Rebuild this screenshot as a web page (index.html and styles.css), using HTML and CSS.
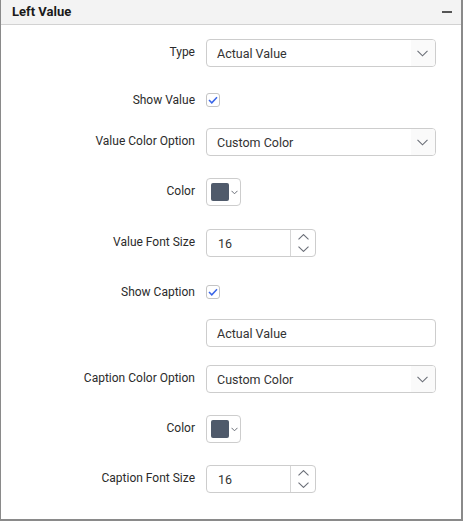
FILE: index.html
```html
<!DOCTYPE html>
<html>
<head>
<meta charset="utf-8">
<link rel="stylesheet" href="styles.css">
</head>
<body>
<div class="panel">
  <div class="panel-header">
    <span class="title">Left Value</span>
    <span class="collapse"></span>
  </div>
  <div class="panel-body">
    <div class="row">
      <span class="lbl">Type</span>
      <div class="select"><span class="val">Actual Value</span><span class="drop"><svg width="11" height="7" viewBox="0 0 11 7"><polyline points="0.5,0.8 5.5,5.8 10.5,0.8" fill="none" stroke="#6b6f78" stroke-width="1.1"/></svg></span></div>
    </div>
    <div class="row check-row mt-26">
      <span class="lbl">Show Value</span>
      <span class="checkbox"><svg width="10" height="8" viewBox="0 0 10 8"><polyline points="1,4 3.8,6.8 9,1.2" fill="none" stroke="#3a66e8" stroke-width="1.5"/></svg></span>
    </div>
    <div class="row mt-21">
      <span class="lbl">Value Color Option</span>
      <div class="select"><span class="val">Custom Color</span><span class="drop"><svg width="11" height="7" viewBox="0 0 11 7"><polyline points="0.5,0.8 5.5,5.8 10.5,0.8" fill="none" stroke="#6b6f78" stroke-width="1.1"/></svg></span></div>
    </div>
    <div class="row mt-22">
      <span class="lbl">Color</span>
      <div class="color-pick"><span class="swatch"></span><svg width="7" height="5" viewBox="0 0 7 5"><polyline points="0.5,0.8 3.5,3.8 6.5,0.8" fill="none" stroke="#6b6f78" stroke-width="1"/></svg></div>
    </div>
    <div class="row mt-23">
      <span class="lbl">Value Font Size</span>
      <div class="numeric"><span class="num">16</span><span class="spin"><svg width="11" height="6" viewBox="0 0 11 6"><polyline points="0.5,5.4 5.5,0.6 10.5,5.4" fill="none" stroke="#6b6f78" stroke-width="1.1"/></svg><svg width="11" height="6" viewBox="0 0 11 6"><polyline points="0.5,0.6 5.5,5.4 10.5,0.6" fill="none" stroke="#6b6f78" stroke-width="1.1"/></svg></span></div>
    </div>
    <div class="row check-row mt-28">
      <span class="lbl">Show Caption</span>
      <span class="checkbox"><svg width="10" height="8" viewBox="0 0 10 8"><polyline points="1,4 3.8,6.8 9,1.2" fill="none" stroke="#3a66e8" stroke-width="1.5"/></svg></span>
    </div>
    <div class="row mt-20">
      <span class="lbl"></span>
      <div class="textbox">Actual Value</div>
    </div>
    <div class="row mt-18">
      <span class="lbl">Caption Color Option</span>
      <div class="select"><span class="val">Custom Color</span><span class="drop"><svg width="11" height="7" viewBox="0 0 11 7"><polyline points="0.5,0.8 5.5,5.8 10.5,0.8" fill="none" stroke="#6b6f78" stroke-width="1.1"/></svg></span></div>
    </div>
    <div class="row mt-22">
      <span class="lbl">Color</span>
      <div class="color-pick"><span class="swatch"></span><svg width="7" height="5" viewBox="0 0 7 5"><polyline points="0.5,0.8 3.5,3.8 6.5,0.8" fill="none" stroke="#6b6f78" stroke-width="1"/></svg></div>
    </div>
    <div class="row mt-22">
      <span class="lbl">Caption Font Size</span>
      <div class="numeric"><span class="num">16</span><span class="spin"><svg width="11" height="6" viewBox="0 0 11 6"><polyline points="0.5,5.4 5.5,0.6 10.5,5.4" fill="none" stroke="#6b6f78" stroke-width="1.1"/></svg><svg width="11" height="6" viewBox="0 0 11 6"><polyline points="0.5,0.6 5.5,5.4 10.5,0.6" fill="none" stroke="#6b6f78" stroke-width="1.1"/></svg></span></div>
    </div>
  </div>
</div>
</body>
</html>
```

FILE: styles.css
```css
* { box-sizing: border-box; }
html, body { margin: 0; padding: 0; background: #ffffff; }
body { font-family: Roboto, "Liberation Sans", sans-serif; color: #333; }

.panel {
  width: 463px;
  height: 521px;
  border-left: 1px solid #8a8a8a;
  border-right: 2px solid #8a8a8a;
  border-bottom: 2px solid #8a8a8a;
  background: #fff;
  display: flex;
  flex-direction: column;
}
.panel-header {
  height: 25px;
  background: #f3f3f3;
  border-bottom: 1px solid #d2d2d2;
  display: flex;
  align-items: center;
  justify-content: space-between;
  padding: 0 9px 0 11px;
}
.title { font-size: 13px; font-weight: 700; color: #1a1a1a; line-height: 1; margin-top: -2px; }
.collapse { width: 10px; height: 2px; background: #555; margin-top: -1px; }

.panel-body { padding-top: 14px; }

.row { display: flex; align-items: center; height: 28px; }
.check-row { height: 14px; }
.mt-18 { margin-top: 18px; }
.mt-20 { margin-top: 20px; }
.mt-21 { margin-top: 21px; }
.mt-22 { margin-top: 22px; }
.mt-23 { margin-top: 23px; }
.mt-26 { margin-top: 26px; }
.mt-28 { margin-top: 28px; }

.lbl {
  width: 194px;
  margin-right: 11px;
  text-align: right;
  font-size: 12px;
  color: #2b2b2b;
  margin-bottom: 3px;
  white-space: nowrap;
}
.check-row .lbl { margin-bottom: 1px; }

.select, .textbox, .numeric, .color-pick {
  border: 1px solid #cdcdcd;
  border-radius: 4px;
  height: 28px;
  background: #fff;
}
.select {
  width: 230px;
  display: flex;
  align-items: center;
  justify-content: space-between;
  overflow: hidden;
}
.val, .textbox, .num { font-size: 12.5px; color: #333; }
.val { padding-left: 10px; }
.drop {
  width: 24px;
  height: 100%;
  background: #fafafa;
  display: flex;
  align-items: center;
  justify-content: center;
  padding-right: 2px;
}
.textbox {
  width: 230px;
  display: flex;
  align-items: center;
  padding-left: 10px;
}
.checkbox {
  width: 14px;
  height: 14px;
  border: 1px solid #c4c4c4;
  border-radius: 3px;
  display: flex;
  align-items: center;
  justify-content: center;
}
.color-pick {
  width: 35px;
  display: flex;
  align-items: center;
  padding-left: 4px;
  gap: 2px;
}
.swatch {
  width: 18px;
  height: 18px;
  background: #4f5a6b;
  border-radius: 2px;
}
.numeric {
  width: 110px;
  display: flex;
  align-items: center;
  justify-content: space-between;
}
.num { padding-left: 11px; }
.spin {
  width: 25px;
  height: 100%;
  border-left: 1px solid #d6d6d6;
  display: flex;
  flex-direction: column;
  align-items: center;
  justify-content: center;
  gap: 6px;
}
```
